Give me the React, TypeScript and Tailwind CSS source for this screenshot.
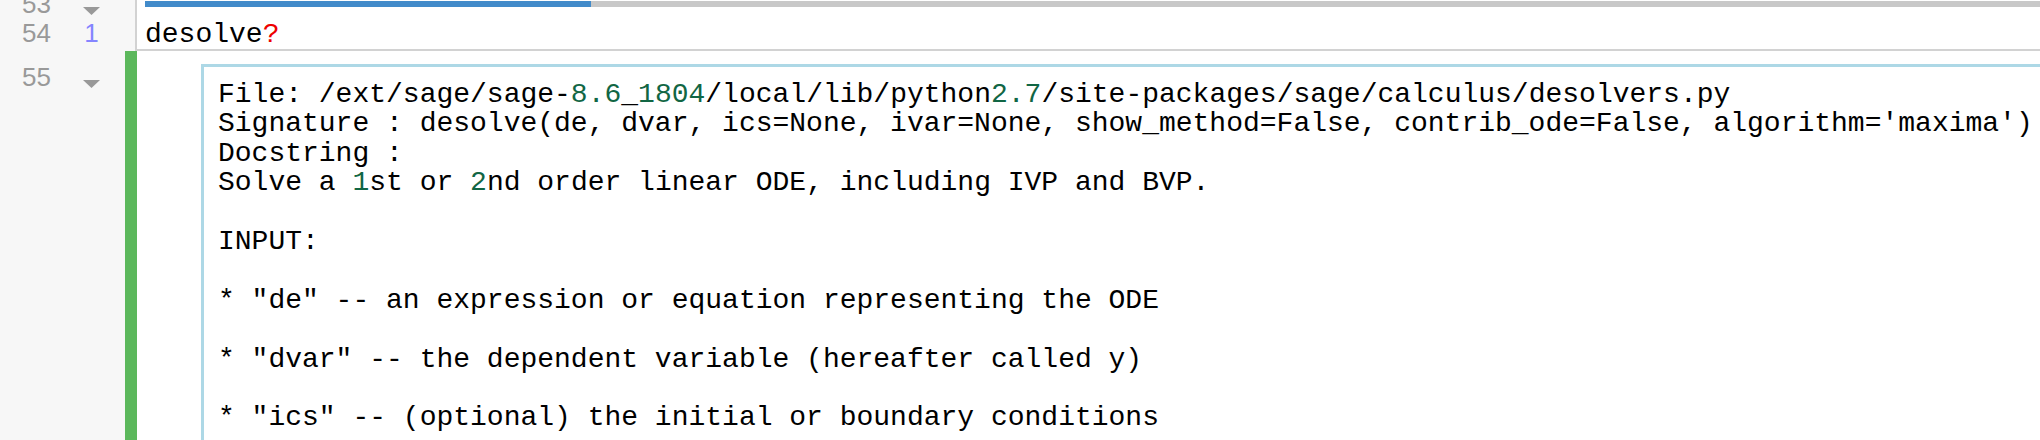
import type { ReactNode } from 'react'

const mono = { fontFamily: '"Liberation Mono", "Courier New", monospace' }
const sans = { fontFamily: '"Liberation Sans", Arial, sans-serif' }

// ── Petits morceaux ─────────────────────────────────

function Fold() {
  return (
    <svg width="17" height="8" viewBox="0 0 17 8" className="block">
      <path d="M0 0 L17 0 L8.5 8 Z" fill="#999999" />
    </svg>
  )
}

function N({ children }: { children: ReactNode }) {
  return <span className="text-[#116644]">{children}</span>
}

function GutterLine({ num, marker }: { num: string; marker?: ReactNode }) {
  return (
    <div className="flex h-[29px] text-[26px] leading-[29px] text-[#999999]" style={sans}>
      <span className="w-[51px] text-right">{num}</span>
      <span className="ml-[32px] w-[17px] flex justify-center">{marker}</span>
    </div>
  )
}

// ── Page ─────────────────────────────────

export default function App() {
  return (
    <div className="w-[2040px] h-[440px] overflow-hidden bg-white flex flex-col">
      {/* Cellule d'entrée */}
      <div className="flex h-[51px] shrink-0">
        <div className="w-[135px] bg-[#f7f7f7] overflow-hidden">
          <div className="-mt-[10px] relative">
            <GutterLine
              num="53"
              marker={
                <span className="pt-[17px]">
                  <Fold />
                </span>
              }
            />
            <GutterLine num="54" marker={<span className="text-[#8585ff]">1</span>} />
          </div>
        </div>
        <div className="flex-1 border-l-2 border-b-2 border-[#d2d2d2] pt-px pl-[8px]">
          <div className="flex h-[6px]">
            <div className="w-[446px] bg-[#428bca]" />
            <div className="flex-1 bg-[#c8c8c8]" />
          </div>
          <div className="mt-[14px] text-[28px] leading-[28px] text-black whitespace-pre" style={mono}>
            desolve<span className="text-[#ee0000]">?</span>
          </div>
        </div>
      </div>

      {/* Sortie */}
      <div className="flex flex-1 min-h-0">
        <div className="w-[125px] bg-[#f7f7f7] pt-[12px]">
          <GutterLine
            num="55"
            marker={
              <span className="pt-[17px]">
                <Fold />
              </span>
            }
          />
        </div>
        <div className="w-[12px] bg-[#5cb85c]" />
        <div className="w-[64px]" />
        <div className="flex-1 mt-[13px] border-l-[3px] border-t-[3px] border-[#add8e6] pl-[14px] pt-[13px]">
          <pre className="text-[28px] leading-[29.4px] text-black m-0" style={mono}>
            File: /ext/sage/sage-<N>8.6</N>_<N>1804</N>/local/lib/python<N>2.7</N>/site-packages/sage/calculus/desolvers.py{'\n'}
            Signature : desolve(de, dvar, ics=None, ivar=None, show_method=False, contrib_ode=False, algorithm='maxima'){'\n'}
            Docstring :{'\n'}
            Solve a <N>1</N>st or <N>2</N>nd order linear ODE, including IVP and BVP.{'\n'}
            {'\n'}
            INPUT:{'\n'}
            {'\n'}
            * "de" -- an expression or equation representing the ODE{'\n'}
            {'\n'}
            * "dvar" -- the dependent variable (hereafter called y){'\n'}
            {'\n'}
            * "ics" -- (optional) the initial or boundary conditions{'\n'}
          </pre>
        </div>
      </div>
    </div>
  )
}
